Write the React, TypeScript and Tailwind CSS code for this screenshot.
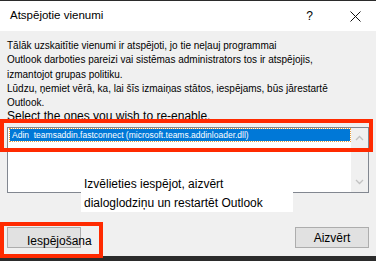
import React from 'react';

function Chevron({ up }: { up?: boolean }) {
  return (
    <svg width="9" height="6" viewBox="0 0 9 6">
      <path
        d={up ? 'M1 5 L4.5 1.5 L8 5' : 'M1 1 L4.5 4.5 L8 1'}
        fill="none"
        stroke="#c2c2c2"
        strokeWidth="1.3"
      />
    </svg>
  );
}

export default function App() {
  return (
    <div className="w-[376px] h-[261px] bg-[#2b2b2b] pt-px overflow-hidden font-['Liberation_Sans',Arial,sans-serif] text-black">
      <div className="relative h-[255px] bg-[#f0f0f0] flex flex-col">
        {/* Title bar */}
        <div className="h-[30px] bg-white flex items-center pl-[10px] pr-[15px] shrink-0">
          <span className="text-[11.5px] leading-none">Atspējotie vienumi</span>
          <span className="ml-auto mr-[37px] text-[12px] leading-none">?</span>
          <svg width="11" height="11" viewBox="0 0 11 11">
            <path d="M0.5 0.5 L10.5 10.5 M10.5 0.5 L0.5 10.5" stroke="#111" strokeWidth="1" />
          </svg>
        </div>

        {/* Body */}
        <div className="flex-1 flex flex-col px-[7px] pt-[8px] pb-[8px]">
          <p className="text-[10px] leading-[14.25px] whitespace-nowrap">
            Tālāk uzskaitītie vienumi ir atspējoti, jo tie neļauj programmai
            <br />
            Outlook darboties pareizi vai sistēmas administrators tos ir atspējojis,
            <br />
            izmantojot grupas politiku.
          </p>
          <p className="text-[10px] leading-[14.25px] whitespace-nowrap">
            Lūdzu, ņemiet vērā, ka, lai šīs izmaiņas stātos, iespējams, būs jārestartē
            <br />
            Outlook.
          </p>
          <p className="text-[12px] leading-[13px] whitespace-nowrap">Select the ones you wish to re-enable.</p>

          {/* List box */}
          <div className="mt-[4px] h-[66px] border border-[#828790] bg-white flex">
            <div className="flex-1 pt-[1px] pl-[2px] pr-[1px]">
              <div className="h-[12px] bg-[#0078d7] text-white text-[8.5px] leading-[12px] pl-[2px] whitespace-pre outline-1 outline-dotted outline-[#e8a040]">
                Adin  teamsaddin.fastconnect (microsoft.teams.addinloader.dll)
              </div>
            </div>
            <div className="w-[17px] bg-[#f0f0f0] flex flex-col items-center justify-between py-[7px]">
              <Chevron up />
              <Chevron />
            </div>
          </div>

          {/* Buttons */}
          <div className="mt-auto flex justify-between">
            <button className="w-[74px] h-[21px] border border-[#adadad] bg-[#e1e1e1] text-[12px] leading-none text-left pl-[19px] pt-[6px] whitespace-nowrap overflow-visible">
              Iespējošana
            </button>
            <button className="w-[74px] h-[21px] border border-[#adadad] bg-[#e1e1e1] text-[12px] leading-none">
              Aizvērt
            </button>
          </div>
        </div>

        {/* Callout over the list */}
        <div className="absolute left-[81px] top-[173px] w-[212px] h-[38px] bg-white pl-[3px] pt-[1px] text-[12px] leading-[19px] whitespace-nowrap">
          Izvēlieties iespējot, aizvērt
          <br />
          dialoglodziņu un restartēt Outlook
        </div>

        {/* Red highlight frames */}
        <div className="absolute left-0 top-[118px] w-[373px] h-[33px] border-4 border-[#ff2a00]" />
        <div className="absolute left-0 top-[221px] w-[103px] h-[36px] border-4 border-[#ff2a00]" />
      </div>
    </div>
  );
}
